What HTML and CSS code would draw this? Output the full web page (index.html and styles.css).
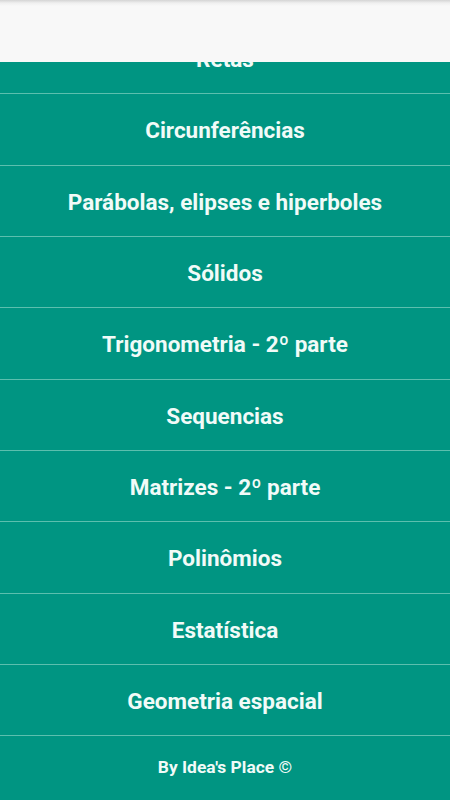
FILE: index.html
```html
<!DOCTYPE html>
<html lang="pt">
<head>
    <meta charset="UTF-8">
    <meta name="viewport" content="width=device-width, initial-scale=1.0">
    <title>Matemática</title>
    <link rel="stylesheet" href="styles.css">
</head>
<body>
    <header class="topbar"></header>

    <ul class="topics">
        <li class="topic">Retas</li>
        <li class="topic">Circunferências</li>
        <li class="topic">Parábolas, elipses e hiperboles</li>
        <li class="topic">Sólidos</li>
        <li class="topic">Trigonometria - 2º parte</li>
        <li class="topic">Sequencias</li>
        <li class="topic">Matrizes - 2º parte</li>
        <li class="topic">Polinômios</li>
        <li class="topic">Estatística</li>
        <li class="topic">Geometria espacial</li>
    </ul>

    <footer class="credits">By Idea's Place ©</footer>
</body>
</html>
```

FILE: styles.css
```css
html, body {
    margin: 0;
    padding: 0;
    height: 100%;
}

body {
    font-family: Roboto, "Liberation Sans", sans-serif;
    background-color: #009582;
    color: #f1fbf8;
    overflow: hidden;
}

/* white bar sits over the scrolled list */
.topbar {
    position: fixed;
    top: 0;
    left: 0;
    right: 0;
    height: 62px;
    background: linear-gradient(to bottom, #d4d4d4 0, #efefef 3px, #f8f8f8 6px, #f8f8f8 100%);
    z-index: 2;
}

.topics {
    list-style: none;
    margin: 23px 0 0 0;
    padding: 0;
}

.topic {
    box-sizing: border-box;
    height: 71.33px;
    padding-top: 2px;
    display: flex;
    align-items: center;
    justify-content: center;
    font-size: 22.5px;
    font-weight: bold;
    border-bottom: 1px solid #5cbfae;
}

.credits {
    height: 64px;
    padding-bottom: 2px;
    box-sizing: border-box;
    display: flex;
    align-items: center;
    justify-content: center;
    font-size: 17.4px;
    font-weight: bold;
}
```
